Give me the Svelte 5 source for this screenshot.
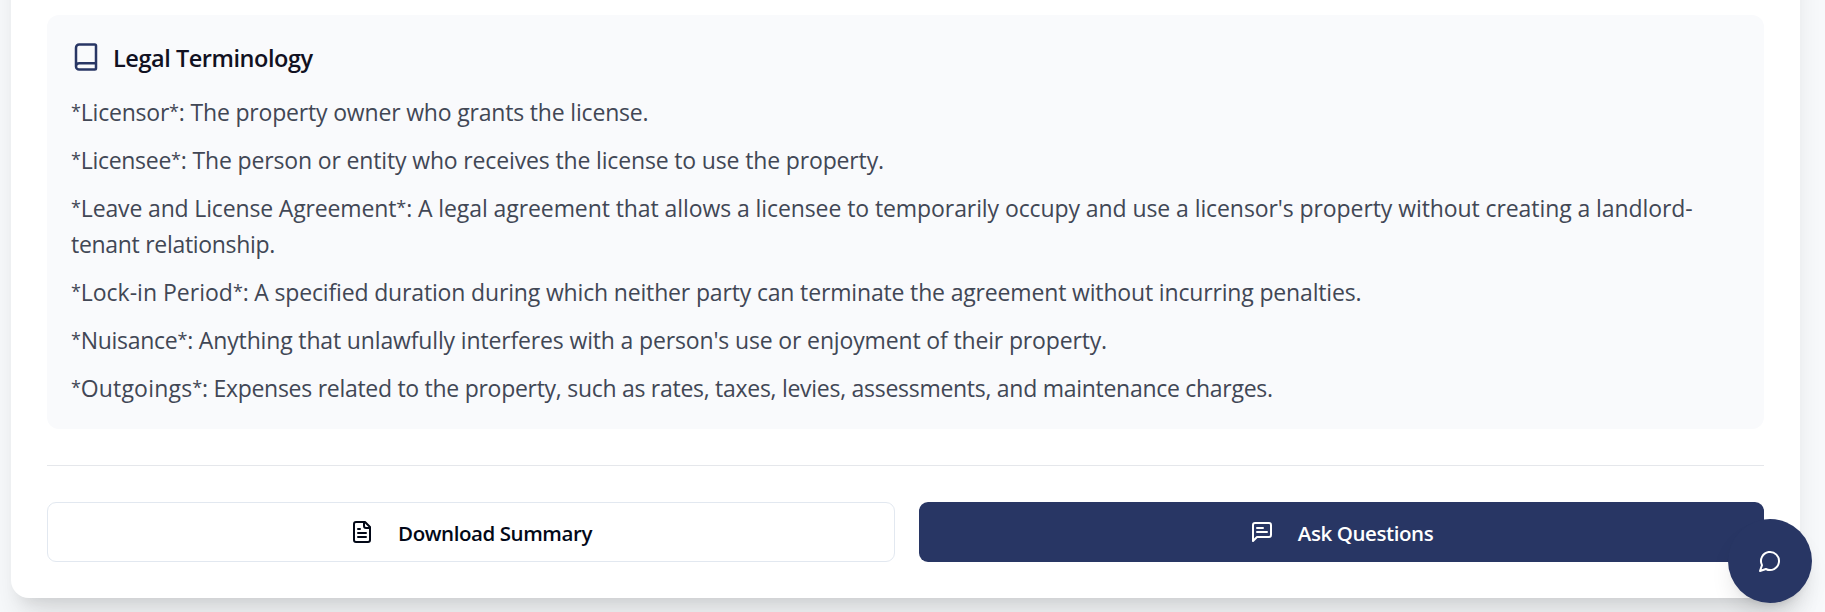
<script>
  const terms = [
    { name: 'Licensor', track: -0.21, lines: [{ text: ': The property owner who grants the license.', track: -0.18 }] },
    { name: 'Licensee', track: -0.3, lines: [{ text: ': The person or entity who receives the license to use the property.', track: -0.15 }] },
    {
      name: 'Leave and License Agreement',
      track: -0.15,
      lines: [
        { text: ": A legal agreement that allows a licensee to temporarily occupy and use a licensor's property without creating a landlord-", track: -0.085 },
        { text: 'tenant relationship.', track: -0.3 }
      ]
    },
    { name: 'Lock-in Period', track: 0, lines: [{ text: ': A specified duration during which neither party can terminate the agreement without incurring penalties.', track: -0.16 }] },
    { name: 'Nuisance', track: -0.3, lines: [{ text: ": Anything that unlawfully interferes with a person's use or enjoyment of their property.", track: -0.15 }] },
    { name: 'Outgoings', track: 0.2, lines: [{ text: ': Expenses related to the property, such as rates, taxes, levies, assessments, and maintenance charges.', track: -0.28 }] }
  ];
</script>

<main class="page">
  <article class="card">
    <section class="panel">
      <h3>
        <svg class="book" viewBox="0 0 24 24"><path d="M4 19.5v-15A2.5 2.5 0 0 1 6.5 2H19a1 1 0 0 1 1 1v18a1 1 0 0 1-1 1H6.5a1 1 0 0 1 0-5H20" /></svg>
        <span>Legal Terminology</span>
      </h3>
      {#each terms as term}
        <p>
          {#each term.lines as line, i}
            <span class="line" style="letter-spacing: {line.track}px">{#if i === 0}<span class="star">*</span><span style="letter-spacing: {term.track}px">{term.name}</span><span class="star">*</span>{/if}{line.text}</span>
          {/each}
        </p>
      {/each}
    </section>
    <div class="actions">
      <button class="outline">
        <svg viewBox="0 0 24 24"><path d="M15 2H6a2 2 0 0 0-2 2v16a2 2 0 0 0 2 2h12a2 2 0 0 0 2-2V7Z" /><path d="M14 2v4a2 2 0 0 0 2 2h4M10 9H8M16 13H8M16 17H8" /></svg>
        <span>Download Summary</span>
      </button>
      <button class="solid">
        <svg viewBox="0 0 24 24"><path d="M21 15a2 2 0 0 1-2 2H7l-4 4V5a2 2 0 0 1 2-2h14a2 2 0 0 1 2 2zM13 8H7M17 12H7" /></svg>
        <span>Ask Questions</span>
      </button>
    </div>
  </article>
  <button class="fab" aria-label="Chat">
    <svg viewBox="0 0 24 24"><path d="M7.9 20A9 9 0 1 0 4 16.1L2 22Z" /></svg>
  </button>
</main>

<style>
  :global(body) { margin: 0; background: #f8fafc; overflow: hidden; }
  .page {
    display: flow-root;
    box-sizing: border-box;
    height: 612px;
    padding: 0 25px 14px 11px;
    overflow: hidden;
    background: #f8fafc;
    font-family: "Segoe UI", "Open Sans", "Noto Sans", sans-serif;
  }
  .card {
    box-sizing: border-box;
    height: 698px;
    margin-top: -100px;
    padding: 115px 36px 36px;
    background: #fff;
    border-radius: 18px;
    box-shadow: 0 30px 37.5px -7.5px rgb(0 0 0 / 0.1), 0 12px 15px -9px rgb(0 0 0 / 0.1);
  }
  .panel {
    box-sizing: border-box;
    height: 414px;
    padding: 24px;
    background: #f9fafc;
    border-radius: 12px;
  }
  h3 {
    display: flex;
    align-items: center;
    height: 36px;
    margin: 0 0 19px;
    gap: 12px;
    color: #111122;
    font-size: 23.5px;
    font-weight: 600;
    letter-spacing: -0.45px;
    line-height: 36px;
  }
  h3 span { padding-top: 2px; }
  svg {
    flex: none;
    width: 24px;
    height: 24px;
    fill: none;
    stroke: currentColor;
    stroke-width: 2;
    stroke-linecap: round;
    stroke-linejoin: round;
  }
  .book { width: 30px; height: 30px; color: #283664; }
  p { margin: 0 0 12px; color: #414755; font-size: 23px; line-height: 36px; }
  .line { display: block; width: max-content; white-space: nowrap; }
  .star { font-size: 18px; line-height: 0; vertical-align: 3px; }
  .actions {
    display: grid;
    grid-template-columns: 848px 1fr;
    gap: 24px;
    margin-top: 36px;
    padding-top: 36px;
    border-top: 1px solid #e5e7eb;
  }
  button { font-family: inherit; }
  .actions button {
    display: flex;
    align-items: center;
    justify-content: center;
    box-sizing: border-box;
    height: 60px;
    padding: 0;
    gap: 24px;
    border: 0;
    border-radius: 9px;
    font-size: 20.5px;
    font-weight: 600;
    letter-spacing: -0.42px;
  }
  .actions span { padding-top: 2px; }
  .actions .outline { background: #fff; color: #020817; border: 1px solid #e2e8f0; }
  .actions .solid { background: #283664; color: #fff; }
  .fab {
    position: absolute;
    left: 1728px;
    top: 519px;
    display: flex;
    align-items: center;
    justify-content: center;
    width: 84px;
    height: 84px;
    padding: 0;
    border: 0;
    border-radius: 50%;
    background: #283664;
    color: #fff;
    box-shadow: 0 15px 22px -4px rgb(0 0 0 / 0.1), 0 6px 9px -6px rgb(0 0 0 / 0.1);
  }
</style>
